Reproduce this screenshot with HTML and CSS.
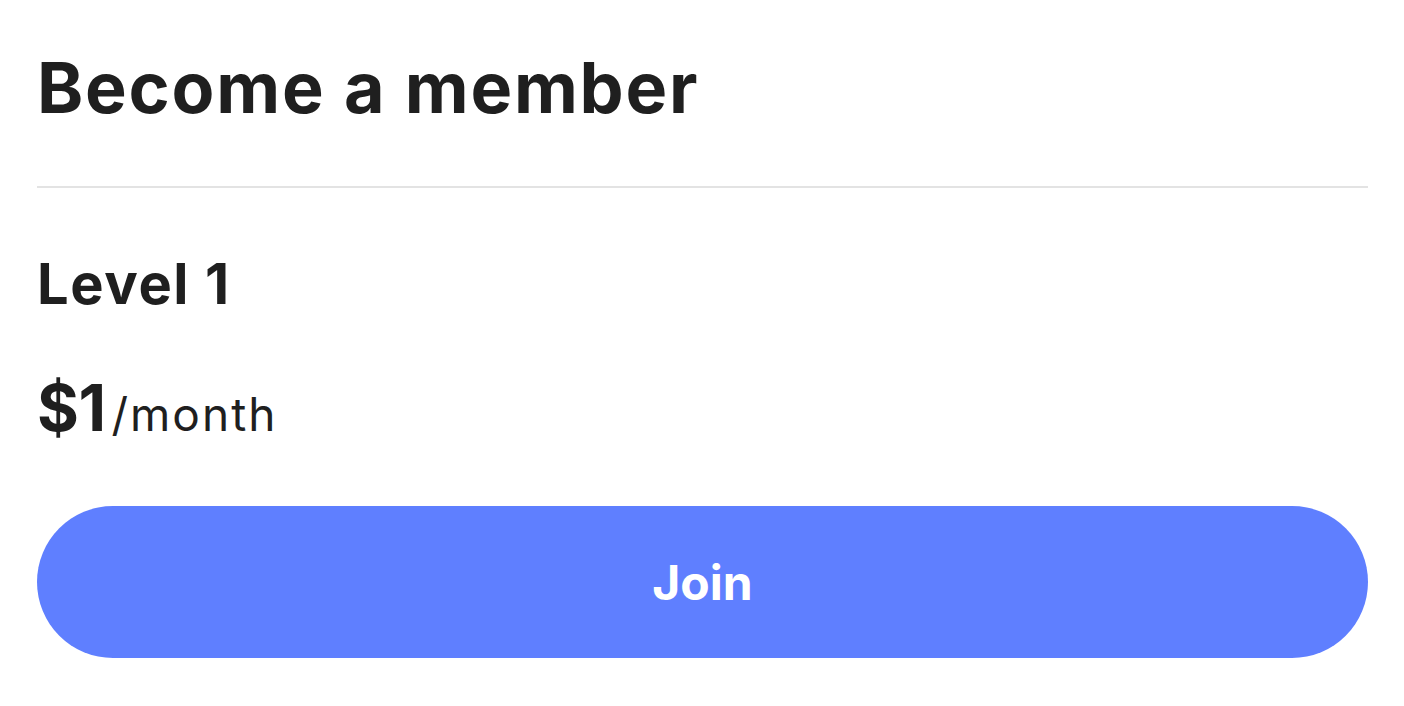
FILE: index.html
```html
<!DOCTYPE html>
<html>
<head>
<meta charset="utf-8">
<link rel="stylesheet" href="styles.css">
</head>
<body>
<div class="card">
  <h1 class="title">Become a member</h1>
  <hr class="divider">
  <h2 class="level">Level 1</h2>
  <div class="price"><span class="amount">$1</span><span class="per">/month</span></div>
  <button class="join">Join</button>
</div>
</body>
</html>
```

FILE: styles.css
```css
html, body {
  margin: 0;
  padding: 0;
  background: #ffffff;
}
body {
  font-family: "Inter", "Noto Sans", sans-serif;
  color: #1f1f1f;
}
.card {
  padding: 0 36px 0 37px;
  display: flex;
  flex-direction: column;
}
.title {
  margin: 0;
  padding-top: 44px;
  font-size: 70px;
  line-height: 88px;
  font-weight: 700;
  letter-spacing: 1.8px;
}
.divider {
  margin: 54px 0 0 0;
  border: none;
  height: 2px;
  background: #e3e3e3;
}
.level {
  margin: 0;
  padding-top: 60px;
  font-size: 56px;
  line-height: 72px;
  font-weight: 700;
  letter-spacing: 1.6px;
}
.price {
  margin-top: 52px;
  display: flex;
  align-items: baseline;
  line-height: 72px;
}
.amount {
  font-size: 64px;
  font-weight: 700;
  letter-spacing: -0.5px;
  margin-right: 6px;
}
.per {
  font-size: 46px;
  font-weight: 400;
  letter-spacing: 2px;
}
.join {
  margin-top: 56px;
  height: 152px;
  border: none;
  border-radius: 76px;
  background: #5f7fff;
  color: #ffffff;
  font-family: "Inter", "Noto Sans", sans-serif;
  font-size: 48px;
  font-weight: 700;
  cursor: pointer;
}
```
